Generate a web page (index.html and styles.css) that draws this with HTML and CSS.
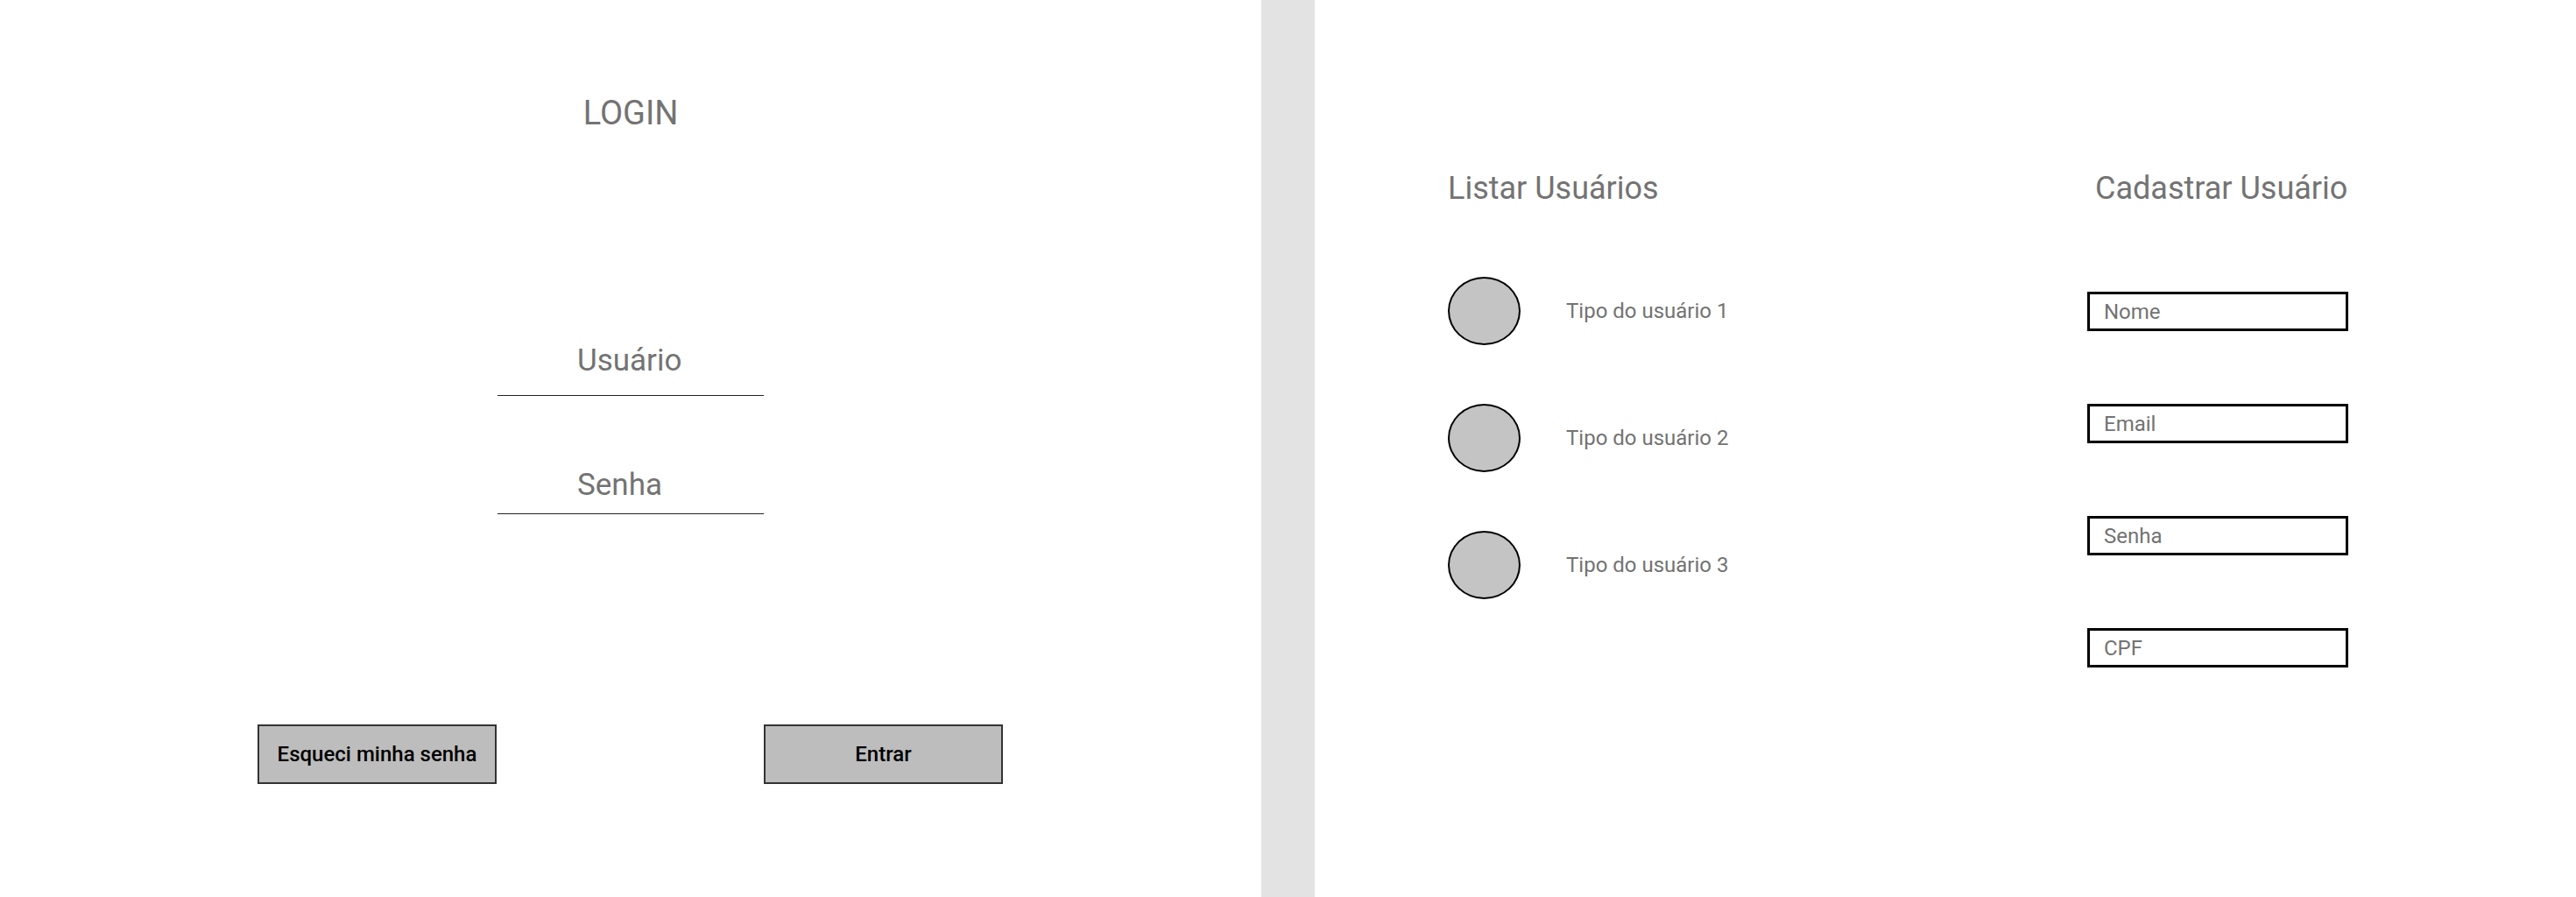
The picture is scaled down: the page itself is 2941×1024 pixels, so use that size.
FILE: index.html
```html
<!DOCTYPE html>
<html lang="pt-BR">
<head>
<meta charset="utf-8">
<title>Login / Usuários</title>
<link rel="stylesheet" href="styles.css">
</head>
<body>
<main class="login">
  <h1 class="login-title">LOGIN</h1>
  <div class="fields">
    <div class="field field-user">
      <div class="field-label">Usuário</div>
      <div class="field-line"></div>
    </div>
    <div class="field field-pass">
      <div class="field-label">Senha</div>
      <div class="field-line"></div>
    </div>
  </div>
  <div class="actions">
    <button class="btn">Esqueci minha senha</button>
    <button class="btn">Entrar</button>
  </div>
</main>
<div class="divider"></div>
<section class="admin">
  <div class="list-col">
    <h2 class="heading">Listar Usuários</h2>
    <ul class="user-list">
      <li class="user-row"><span class="avatar"></span><span class="user-type">Tipo do usuário 1</span></li>
      <li class="user-row"><span class="avatar"></span><span class="user-type">Tipo do usuário 2</span></li>
      <li class="user-row"><span class="avatar"></span><span class="user-type">Tipo do usuário 3</span></li>
    </ul>
  </div>
  <div class="form-col">
    <h2 class="heading heading-form">Cadastrar Usuário</h2>
    <div class="inputs">
      <div class="input-box">Nome</div>
      <div class="input-box">Email</div>
      <div class="input-box">Senha</div>
      <div class="input-box">CPF</div>
    </div>
  </div>
</section>
</body>
</html>
```
FILE: styles.css
```css
* { box-sizing: border-box; }
html, body { margin: 0; padding: 0; }
body {
  width: 2941px;
  height: 1024px;
  display: flex;
  background: #fff;
  font-family: Roboto, "Liberation Sans", sans-serif;
  color: #737373;
  overflow: hidden;
}
.login {
  width: 1440px;
  flex: none;
  padding-top: 110px;
  display: flex;
  flex-direction: column;
}
.login-title {
  margin: 0;
  font-size: 38px;
  line-height: 1;
  font-weight: 400;
  text-align: center;
  color: #737373;
}
.fields {
  margin: 246px 0 0 568px;
  width: 304px;
  display: flex;
  flex-direction: column;
}
.field-label {
  font-size: 35px;
  line-height: 1;
  font-weight: 400;
  padding-left: 91px;
}
.field-user .field-label { padding-bottom: 22px; }
.field-pass { margin-top: 84px; }
.field-pass .field-label { padding-bottom: 15px; }
.field-line {
  height: 1px;
  background: #222;
}
.actions {
  display: flex;
  gap: 305px;
  padding-left: 294px;
  margin-top: 240px;
}
.btn {
  width: 273px;
  height: 68px;
  background: #bdbdbd;
  border: 2px solid #333;
  border-radius: 0;
  font-family: Roboto, "Liberation Sans", sans-serif;
  font-size: 24px;
  font-weight: 500;
  color: #000;
  padding: 0;
}
.divider {
  width: 61px;
  flex: none;
  background: #e3e3e3;
}
.admin {
  flex: 1;
  display: flex;
  padding: 197px 260px 0 152px;
}
.heading {
  margin: 0;
  font-size: 36px;
  line-height: 1;
  font-weight: 400;
  color: #737373;
}
.list-col { display: flex; flex-direction: column; }
.user-list {
  list-style: none;
  margin: 83px 0 0;
  padding: 0;
  display: flex;
  flex-direction: column;
  gap: 67px;
}
.user-row {
  display: flex;
  align-items: center;
  gap: 52px;
}
.avatar {
  width: 83px;
  height: 78px;
  border-radius: 50%;
  background: #c4c4c4;
  border: 2px solid #000;
  flex: none;
}
.user-type {
  font-size: 24px;
  line-height: 1;
  color: #737373;
}
.form-col {
  margin-left: auto;
  width: 298px;
  display: flex;
  flex-direction: column;
}
.heading-form { padding-left: 9px; white-space: nowrap; }
.inputs {
  margin-top: 100px;
  display: flex;
  flex-direction: column;
  gap: 83px;
}
.input-box {
  height: 45px;
  border: 3px solid #000;
  display: flex;
  align-items: center;
  padding-left: 16px;
  font-size: 24px;
  line-height: 1;
  color: #737373;
}
```
